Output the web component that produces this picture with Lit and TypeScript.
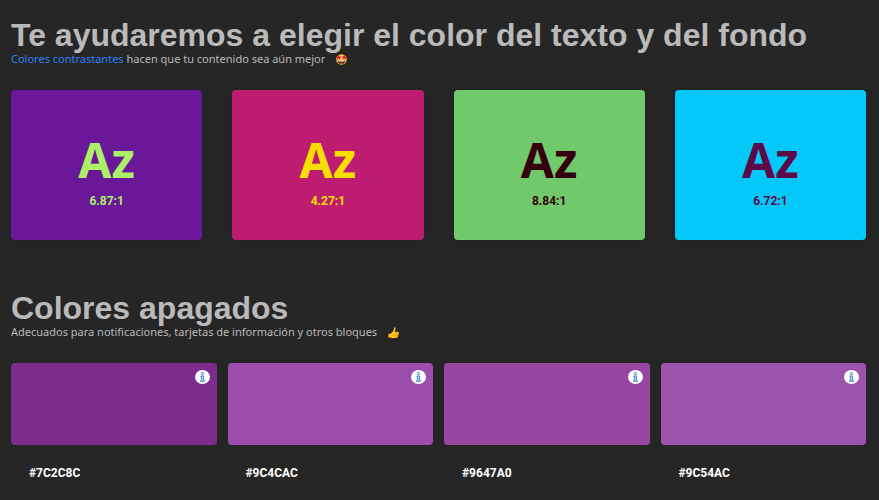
import { LitElement, html, css, svg } from "lit";
import { customElement } from "lit/decorators.js";
import { styleMap } from "lit/directives/style-map.js";

interface ContrastPair {
  background: string;
  text: string;
  ratio: string;
}

const pairs: ContrastPair[] = [
  { background: "#6b1799", text: "#acf068", ratio: "6.87:1" },
  { background: "#be1c70", text: "#f7e000", ratio: "4.27:1" },
  { background: "#70ca6b", text: "#34000f", ratio: "8.84:1" },
  { background: "#04c8f8", text: "#5c0a48", ratio: "6.72:1" },
];

const mutedColors = ["#7C2C8C", "#9C4CAC", "#9647A0", "#9C54AC"];

const starEyes = html`<svg class="emoji" viewBox="0 0 26 26" role="img" aria-label="Ojos de estrella">
  ${svg`
    <circle cx="13" cy="13" r="11.5" fill="#ffc83d" stroke="#1b1510" stroke-width="2"/>
    <path d="M7.5 3.5l1.6 3.4 3.6.4-2.7 2.5.8 3.7-3.3-1.8-3.3 1.8.8-3.7-2.7-2.5 3.6-.4z" fill="#e21f4b"/>
    <path d="M18.5 3.5l1.6 3.4 3.6.4-2.7 2.5.8 3.7-3.3-1.8-3.3 1.8.8-3.7-2.7-2.5 3.6-.4z" fill="#e21f4b"/>
    <path d="M5.5 14.5h15c0 5-3 8-7.5 8s-7.5-3-7.5-8z" fill="#3f1b1b"/>
    <path d="M7 14.5h12v2.5H7z" fill="#fff"/>
    <path d="M9 20.5c2-2 6-2 8 0-2 2-6 2-8 0z" fill="#e4574b"/>
  `}
</svg>`;

const thumbsUp = html`<svg class="emoji" viewBox="0 0 26 26" role="img" aria-label="Pulgar arriba">
  ${svg`
    <path d="M2 14.5h5.5c3-2 5.5-6 5.8-11.5.2-2 4.7-2 4.7 2.5 0 2.5-.8 4-1.5 5.5H22c3.2 0 3.5 3.5 1.5 4.5 1.2 1.5.8 3.2-.8 3.8.7 1.7-.2 3-1.7 3.4.2 1.6-1 2.3-2.5 2.3h-7c-2 0-3-1-5-1H2z" fill="#ffc022" stroke="#1b1510" stroke-width="1.5"/>
    <path d="M16 15.3h7M16.5 19.2h6M16.5 22.6h4.5" stroke="#d78a12" stroke-width="1.2" fill="none"/>
  `}
</svg>`;

@customElement("app-root")
export class AppRoot extends LitElement {
  static styles = css`
    :host {
      display: block;
      box-sizing: border-box;
      min-height: 100vh;
      padding: 19px 13px 5px 11px;
      background: #262626;
      color: #bababa;
      font-family: "Open Sans", "Noto Sans", sans-serif;
      font-size: 12px;
    }
    h2 {
      margin: 0 0 1px;
      font: bold 32px/32px "Liberation Sans", Arial, sans-serif;
      color: #bababa;
    }
    .lead {
      display: flex;
      align-items: center;
      gap: 10px;
      margin: 0;
      font: 11px/14px "Noto Sans", "Open Sans", sans-serif;
    }
    a {
      color: #2c82f5;
      text-decoration: none;
    }
    .emoji {
      width: 13px;
      height: 13px;
      flex: none;
    }
    .pairs,
    .muted {
      display: grid;
      grid-template-columns: repeat(4, 1fr);
      margin-top: 24px;
    }
    .pairs {
      gap: 30px;
      margin-bottom: 52px;
    }
    .muted {
      gap: 11px;
    }
    .pair {
      box-sizing: border-box;
      min-height: 150px;
      padding-top: 38px;
      border-radius: 4px;
      text-align: center;
      font-weight: bold;
      box-shadow: 0 0 14px rgba(0, 0, 0, 0.1);
    }
    .sample {
      font-size: 48px;
      line-height: 64px;
    }
    .ratio {
      font: bold 12px/18px Roboto, sans-serif;
    }
    .card {
      border-radius: 4px;
      box-shadow: 0 0 10px rgba(0, 0, 0, 0.06);
    }
    .swatch {
      display: flex;
      justify-content: flex-end;
      align-items: flex-start;
      box-sizing: border-box;
      height: 82px;
      padding: 7px;
      border-radius: 4px;
    }
    .info {
      display: flex;
      padding: 0;
      border: 0;
      border-radius: 50%;
      background: #fff;
      cursor: pointer;
    }
    .info svg {
      width: 15px;
      height: 14px;
    }
    .code {
      padding: 18px;
      font: bold 12px/20px Roboto, sans-serif;
      color: #fff;
    }
  `;

  render() {
    return html`
      <main>
        <section>
          <h2>Te ayudaremos a elegir el color del texto y del fondo</h2>
          <p class="lead">
            <span><a href="#contraste">Colores contrastantes</a> hacen que tu contenido sea aún mejor</span>
            ${starEyes}
          </p>
          <div class="pairs" id="contraste">
            ${pairs.map(
              (p) => html`<div class="pair" style=${styleMap({ background: p.background, color: p.text })}>
                <div class="sample">Az</div>
                <div class="ratio">${p.ratio}</div>
              </div>`
            )}
          </div>
        </section>
        <section>
          <h2>Colores apagados</h2>
          <p class="lead">
            <span>Adecuados para notificaciones, tarjetas de información y otros bloques</span>
            ${thumbsUp}
          </p>
          <div class="muted">
            ${mutedColors.map(
              (c) => html`<article class="card">
                <div class="swatch" style=${styleMap({ background: c })}>
                  <button class="info" type="button" aria-label="Información sobre ${c}">
                    <svg viewBox="0 0 15 14" aria-hidden="true">
                      <circle cx="7.5" cy="3.5" r="1.2" fill="#dce9fa" stroke="#3c78cc" stroke-width="0.8" />
                      <path d="M5.9 5.9h2.6v4.3h.8v1.3H5.7v-1.3h.8V7h-.6z" fill="#b5d0f2" stroke="#3c78cc" stroke-width="0.8" />
                    </svg>
                  </button>
                </div>
                <div class="code">${c}</div>
              </article>`
            )}
          </div>
        </section>
      </main>
    `;
  }
}
